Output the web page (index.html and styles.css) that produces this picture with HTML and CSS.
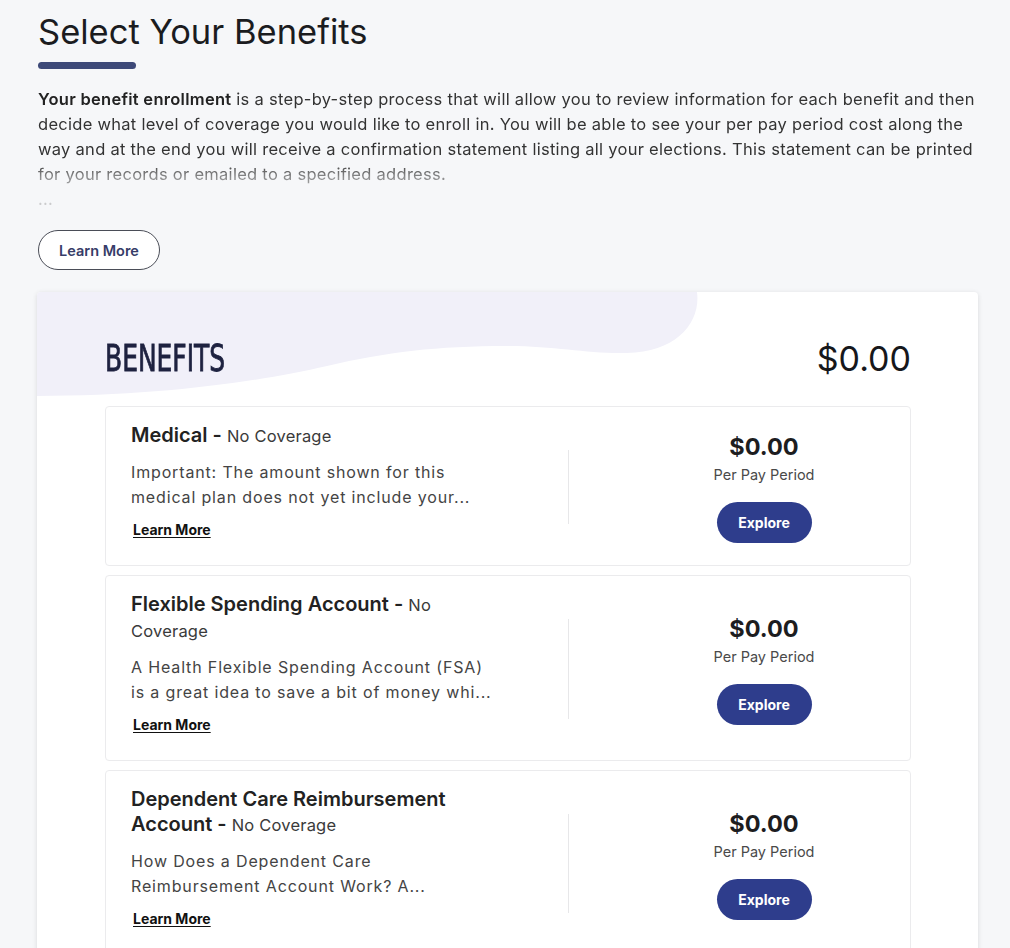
FILE: index.html
```html
<!DOCTYPE html>
<html lang="en">
<head>
<meta charset="utf-8">
<title>Select Your Benefits</title>
<link rel="stylesheet" href="styles.css">
</head>
<body>
<main class="page">
  <h1 class="page-title">Select Your Benefits</h1>
  <div class="title-bar"></div>
  <div class="intro">
    <p class="intro-text"><strong>Your benefit enrollment</strong> is a step-by-step process that will allow you to review information for each benefit and then decide what level of coverage you would like to enroll in. You will be able to see your per pay period cost along the way and at the end you will receive a confirmation statement listing all your elections. This statement can be printed for your records or emailed to a specified address.</p>
    <p class="intro-more">...</p>
  </div>
  <button class="btn-outline">Learn More</button>

  <section class="card">
    <svg class="card-wave" viewBox="0 0 941 110" width="941" height="110" aria-hidden="true">
      <path d="M0,0 H660 C664,30 640,60 590,61 C550,62 520,54 470,54 C400,54 350,60 290,74 C220,90 120,104 0,104 Z" fill="#f1f0f9"/>
    </svg>
    <header class="card-head">
      <h2 class="card-title"><span>BENEFITS</span></h2>
      <div class="card-total">$0.00</div>
    </header>
    <div class="items">
      <article class="item">
        <div class="item-info">
          <h3 class="item-title">Medical - <span class="item-status">No Coverage</span></h3>
          <p class="item-desc"><span>Important: The amount shown for this</span><span>medical plan does not yet include your...</span></p>
          <a class="item-link" href="#">Learn More</a>
        </div>
        <div class="item-divider"></div>
        <div class="item-cost">
          <div class="cost-amount">$0.00</div>
          <div class="cost-label">Per Pay Period</div>
          <button class="btn-primary">Explore</button>
        </div>
      </article>
      <article class="item">
        <div class="item-info">
          <h3 class="item-title">Flexible Spending Account - <span class="item-status">No Coverage</span></h3>
          <p class="item-desc"><span>A Health Flexible Spending Account (FSA)</span><span>is a great idea to save a bit of money whi...</span></p>
          <a class="item-link" href="#">Learn More</a>
        </div>
        <div class="item-divider"></div>
        <div class="item-cost">
          <div class="cost-amount">$0.00</div>
          <div class="cost-label">Per Pay Period</div>
          <button class="btn-primary">Explore</button>
        </div>
      </article>
      <article class="item">
        <div class="item-info">
          <h3 class="item-title">Dependent Care Reimbursement Account - <span class="item-status">No Coverage</span></h3>
          <p class="item-desc"><span>How Does a Dependent Care</span><span>Reimbursement Account Work? A...</span></p>
          <a class="item-link" href="#">Learn More</a>
        </div>
        <div class="item-divider"></div>
        <div class="item-cost">
          <div class="cost-amount">$0.00</div>
          <div class="cost-label">Per Pay Period</div>
          <button class="btn-primary">Explore</button>
        </div>
      </article>
    </div>
  </section>
</main>
</body>
</html>
```

FILE: styles.css
```css
* { box-sizing: border-box; }

html, body {
  margin: 0;
  padding: 0;
  background: #f6f7f9;
}

body {
  font-family: Inter, "Noto Sans", "Liberation Sans", sans-serif;
  color: #2b2b2b;
}

.page {
  padding: 12px 32px 40px 37px;
  width: 1010px;
}

.page-title {
  margin: 0;
  font-size: 34.5px;
  line-height: 40px;
  font-weight: 400;
  color: #1b1c1f;
  padding-left: 1px;
}

.title-bar {
  margin: 10px 0 0 1px;
  width: 98px;
  height: 7px;
  border-radius: 4px;
  background: #3d4978;
}

.intro {
  margin-top: 18px;
  padding-left: 1px;
  -webkit-mask-image: linear-gradient(to bottom, #000 60%, rgba(0,0,0,.55) 72%, rgba(0,0,0,.12) 100%);
  mask-image: linear-gradient(to bottom, #000 60%, rgba(0,0,0,.55) 72%, rgba(0,0,0,.12) 100%);
}

.intro-text, .intro-more {
  margin: 0;
  font-size: 16.5px;
  line-height: 25px;
  color: #333;
  letter-spacing: 0.28px;
}

.intro-text strong {
  font-weight: 600;
  color: #222;
}

.btn-outline {
  margin: 18px 0 0 1px;
  height: 40px;
  width: 122px;
  border: 1.5px solid #4a4d57;
  border-radius: 20px;
  background: #fff;
  font-family: inherit;
  font-size: 14.5px;
  font-weight: 600;
  color: #363c68;
  cursor: pointer;
}

.card {
  position: relative;
  margin-top: 22px;
  width: 941px;
  background: #fff;
  border-radius: 4px;
  box-shadow: 0 1px 5px rgba(0,0,0,.12);
  padding: 0 67px 40px 68px;
  overflow: hidden;
}

.card-wave {
  position: absolute;
  left: 0;
  top: 0;
}

.card-head {
  position: relative;
  display: flex;
  justify-content: space-between;
  align-items: baseline;
  padding-top: 45px;
  margin-bottom: 25px;
}

.card-title {
  margin: 0;
  font-family: "Liberation Sans Narrow", "DejaVu Sans Condensed", "Liberation Sans", sans-serif;
  font-weight: 400;
  font-size: 37px;
  line-height: 44px;
  color: #1e2240;
}

.card-title span {
  display: inline-block;
  transform: scaleX(0.75);
  transform-origin: left center;
  -webkit-text-stroke: 0.8px #1e2240;
}

.card-total {
  font-size: 34px;
  line-height: 44px;
  font-weight: 400;
  color: #16171b;
}

.items {
  position: relative;
  display: flex;
  flex-direction: column;
  gap: 9px;
}

.item {
  display: flex;
  border: 1px solid #ebebed;
  border-radius: 4px;
  padding: 16px 26px 22px 25px;
  background: #fff;
}

.item-info {
  flex: 1;
  padding-bottom: 3px;
}

.item-title {
  margin: 0;
  max-width: 340px;
  font-size: 20px;
  line-height: 25px;
  font-weight: 600;
  color: #222;
}

.item-status {
  font-size: 16.5px;
  font-weight: 400;
  color: #3a3a3a;
  letter-spacing: 0.2px;
}

.item-desc {
  margin: 11px 0 0;
  font-size: 16px;
  line-height: 25px;
  color: #444;
  letter-spacing: 0.85px;
}

.item-desc span {
  display: block;
  white-space: nowrap;
}

.item-link {
  display: inline-block;
  margin: 10px 0 0 2px;
  font-size: 14px;
  line-height: 20px;
  font-weight: 700;
  color: #111;
  text-decoration: underline;
  text-underline-offset: 2px;
}

.item-divider {
  width: 1px;
  background: #e7e7e9;
  margin: 27px 0 19px;
}

.item-cost {
  width: 240px;
  margin-left: 75px;
  padding-top: 10px;
  display: flex;
  flex-direction: column;
  align-items: center;
  justify-content: center;
}

.cost-amount {
  font-size: 23.5px;
  line-height: 28px;
  font-weight: 700;
  color: #1d1d1f;
}

.cost-label {
  margin-top: 4px;
  font-size: 14.5px;
  line-height: 20px;
  color: #4a4a4a;
}

.btn-primary {
  margin-top: 17px;
  height: 41px;
  width: 95px;
  border: none;
  border-radius: 21px;
  background: #2e3d8c;
  color: #fff;
  font-family: inherit;
  font-size: 14px;
  font-weight: 700;
  cursor: pointer;
}
```
